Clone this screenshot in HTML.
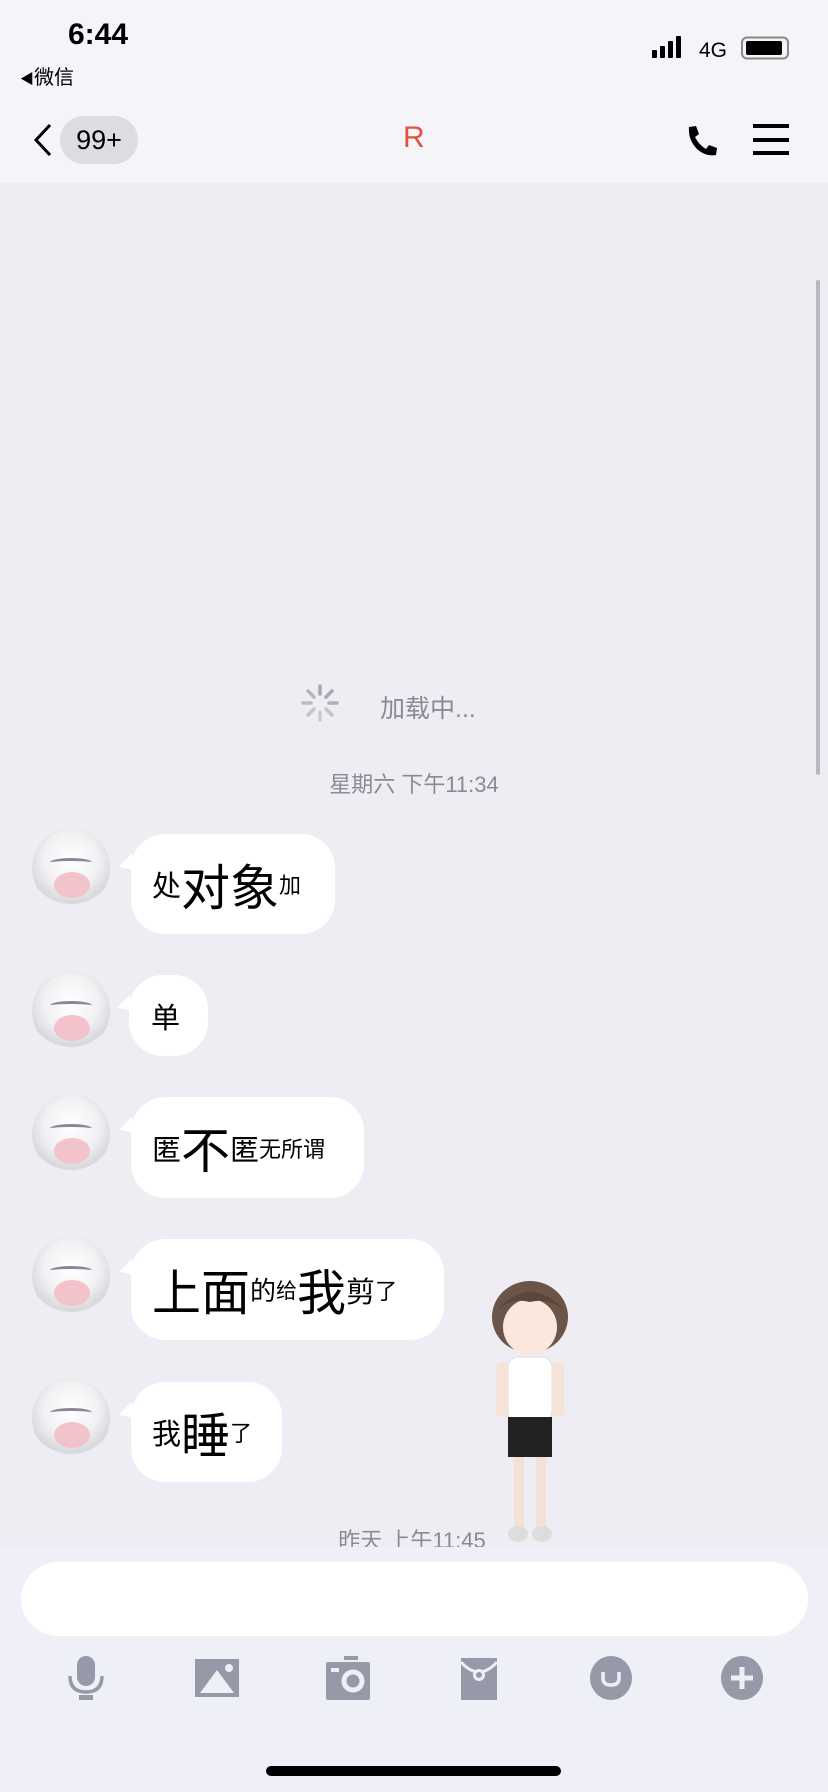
<!DOCTYPE html>
<html><head><meta charset="utf-8"><style>
*{margin:0;padding:0;box-sizing:border-box}
body{width:828px;height:1792px;background:#ededf3;position:relative;overflow:hidden;font-family:"Liberation Sans","Noto Sans CJK SC",sans-serif;color:#000}
.abs{position:absolute}
.hdr{left:0;top:0;width:828px;height:183px;background:#f4f4f9}
.bub{position:absolute;left:131px;background:#fff;border-radius:34px;display:flex;align-items:center;padding:0 0 0 21px;white-space:nowrap;font-family:"Noto Sans CJK SC",sans-serif}
.bub:before{content:"";position:absolute;left:-12px;top:22px;border-right:16px solid #fff;border-top:8px solid transparent;border-bottom:10px solid transparent;transform:rotate(-20deg)}
.av{position:absolute;left:32px;width:78px;height:80px;border-radius:50%;background:radial-gradient(circle at 50% 40%,#fff 0,#f1f1f3 45%,#d7d7dc 70%,#ededf3 72%)}
.av:after{content:"";position:absolute;left:22px;top:44px;width:36px;height:26px;border-radius:50%;background:#f3c3cc}
.av:before{content:"";position:absolute;left:18px;top:30px;width:42px;height:6px;border-top:3px solid #889;border-radius:50%}
.ts{position:absolute;width:828px;text-align:center;color:#8a8a93;font-size:22px}
.ic{position:absolute;top:1654px;width:48px;height:48px}
</style></head><body>
<div class="abs hdr"></div>
<div class="abs" style="left:68px;top:18px;font-size:30px;font-weight:bold">6:44</div>
<div class="abs" style="left:20px;top:61px;font-size:20px"><span style="font-size:14px">◀</span>微信</div>
<svg class="abs" style="left:652px;top:36px" width="140" height="26">
<rect x="0" y="14" width="5" height="8" rx="1"/><rect x="8" y="10" width="5" height="12" rx="1"/><rect x="16" y="5" width="5" height="17" rx="1"/><rect x="24" y="0" width="5" height="22" rx="1"/>
<text x="47" y="21" font-size="21" font-family="Liberation Sans">4G</text>
<rect x="90" y="1.5" width="46" height="21" rx="5" fill="none" stroke="#888" stroke-width="2"/><rect x="94" y="5" width="36" height="14" rx="2"/>
</svg>
<svg class="abs" style="left:28px;top:122px" width="30" height="36"><path d="M22 3 L8 18 L22 33" stroke="#000" stroke-width="3" fill="none"/></svg>
<div class="abs" style="left:60px;top:116px;width:78px;height:48px;border-radius:24px;background:#dcdce2;font-size:27px;text-align:center;line-height:48px">99+</div>
<div class="abs" style="left:403px;top:121px;font-size:30px;color:#e0533f">R</div>
<svg class="abs" style="left:684px;top:124px" width="36" height="34"><path d="M5 3 L12 2 L15 10 L11 13 Q15 21 22 25 L25 21 L33 24 L32 31 Q22 33 13 25 Q4 16 5 3Z" fill="#000"/></svg>
<div class="abs" style="left:753px;top:124px;width:36px;height:4px;background:#000"></div>
<div class="abs" style="left:753px;top:138px;width:36px;height:4px;background:#000"></div>
<div class="abs" style="left:753px;top:151px;width:36px;height:4px;background:#000"></div>
<div class="abs" style="left:816px;top:280px;width:4px;height:495px;border-radius:2px;background:#b8b8c0"></div>
<svg class="abs" style="left:300px;top:683px" width="40" height="40"><g stroke="#a8a8b0" stroke-width="3.5" stroke-linecap="round">
<line x1="20" y1="3" x2="20" y2="11"/><line x1="20" y1="29" x2="20" y2="37" opacity=".5"/><line x1="3" y1="20" x2="11" y2="20" opacity=".7"/><line x1="29" y1="20" x2="37" y2="20" opacity=".9"/>
<line x1="8" y1="8" x2="14" y2="14" opacity=".8"/><line x1="26" y1="26" x2="32" y2="32" opacity=".6"/><line x1="32" y1="8" x2="26" y2="14"/><line x1="8" y1="32" x2="14" y2="26" opacity=".6"/></g></svg>
<div class="abs" style="left:380px;top:689px;font-size:25px;color:#8a8a93">加载中...</div>
<div class="ts" style="top:767px">星期六 下午11:34</div>
<div class="av" style="top:828px"></div>
<div class="bub" style="top:834px;height:100px;width:204px"><span style="font-size:29px">处</span><span style="font-size:49px">对象</span><span style="font-size:22px">加</span></div>
<div class="av" style="top:971px"></div>
<div class="bub" style="top:975px;height:81px;left:129px;width:79px;padding-left:22px"><span style="font-size:29px">单</span></div>
<div class="av" style="top:1094px"></div>
<div class="bub" style="top:1097px;height:101px;width:233px"><span style="font-size:29px">匿</span><span style="font-size:49px">不</span><span style="font-size:29px">匿</span><span style="font-size:22px">无所谓</span></div>
<div class="av" style="top:1236px"></div>
<div class="bub" style="top:1239px;height:101px;width:313px"><span style="font-size:49px">上面</span><span style="font-size:26px">的</span><span style="font-size:21px">给</span><span style="font-size:49px">我</span><span style="font-size:29px">剪</span><span style="font-size:22px">了</span></div>
<div class="av" style="top:1378px"></div>
<div class="bub" style="top:1382px;height:100px;width:151px"><span style="font-size:29px">我</span><span style="font-size:49px">睡</span><span style="font-size:22px">了</span></div>
<svg class="abs" style="left:480px;top:1272px" width="100" height="275">
<ellipse cx="50" cy="45" rx="38" ry="36" fill="#6b5448"/><ellipse cx="50" cy="55" rx="27" ry="28" fill="#fbe7dc"/><path d="M16 40 Q50 0 86 40 Q70 25 50 30 Q30 25 16 40Z" fill="#5c463b"/>
<rect x="28" y="85" width="44" height="65" rx="10" fill="#fff" stroke="#ddd"/><rect x="16" y="90" width="12" height="55" rx="6" fill="#f6e3d8"/><rect x="72" y="90" width="12" height="55" rx="6" fill="#f6e3d8"/>
<rect x="28" y="145" width="44" height="40" fill="#222"/><rect x="34" y="185" width="10" height="70" fill="#f4e1d6"/><rect x="56" y="185" width="10" height="70" fill="#f4e1d6"/>
<ellipse cx="38" cy="262" rx="10" ry="8" fill="#ddd"/><ellipse cx="62" cy="262" rx="10" ry="8" fill="#ddd"/></svg>
<div class="ts" style="top:1523px;left:-2px">昨天 上午11:45</div>
<div class="abs" style="left:0;top:1547px;width:828px;height:245px;background:#eeeff7"></div>
<div class="abs" style="left:21px;top:1562px;width:787px;height:74px;border-radius:37px;background:#fff"></div>
<svg class="ic" style="left:62px"><rect x="15" y="2" width="18" height="30" rx="9" fill="#9599a8"/><path d="M8 22 Q8 38 24 38 Q40 38 40 22" stroke="#9599a8" stroke-width="3.5" fill="none"/><rect x="17" y="41" width="14" height="5" fill="#9599a8"/></svg>
<svg class="ic" style="left:195px"><rect x="0" y="5" width="44" height="38" fill="#9599a8"/><path d="M5 39 L22 16 L39 39Z" fill="#eeeff7"/><circle cx="34" cy="14" r="4" fill="#eeeff7"/></svg>
<svg class="ic" style="left:326px"><rect x="0" y="8" width="44" height="38" rx="2" fill="#9599a8"/><rect x="18" y="2" width="14" height="4" fill="#9599a8"/><circle cx="27" cy="27" r="9" fill="none" stroke="#eeeff7" stroke-width="5"/><rect x="5" y="14" width="8" height="4" fill="#eeeff7"/></svg>
<svg class="ic" style="left:461px"><path d="M0 4 L36 4 L36 46 L0 46Z" fill="#9599a8"/><path d="M0 8 Q18 28 36 8" stroke="#eeeff7" stroke-width="3" fill="none"/><circle cx="18" cy="21" r="6" fill="#eeeff7"/><circle cx="18" cy="21" r="3" fill="#9599a8"/></svg>
<svg class="ic" style="left:590px"><ellipse cx="21" cy="24" rx="21" ry="22" fill="#9599a8"/><path d="M13 18 V24 Q13 31 21 31 Q29 31 29 24 V18" stroke="#eeeff7" stroke-width="3.5" fill="none"/></svg>
<svg class="ic" style="left:721px"><ellipse cx="21" cy="24" rx="21" ry="22" fill="#9599a8"/><path d="M21 13 V35 M10 24 H32" stroke="#eeeff7" stroke-width="5"/></svg>
<div class="abs" style="left:266px;top:1766px;width:295px;height:10px;border-radius:5px;background:#000"></div>
</body></html>
